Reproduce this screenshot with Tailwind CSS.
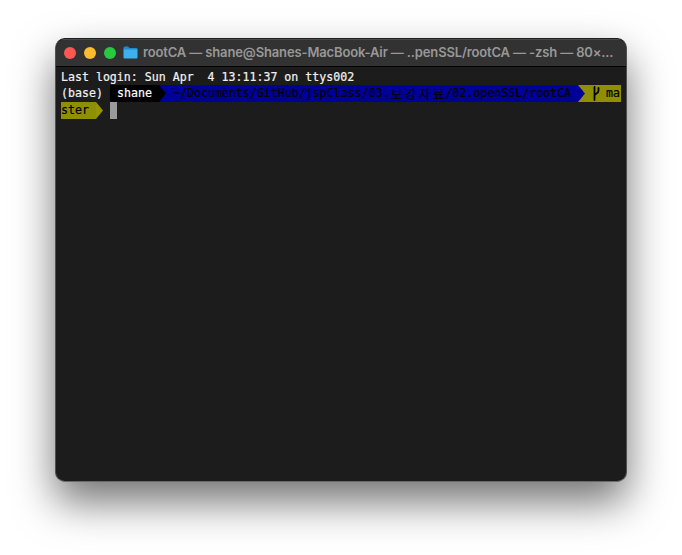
<!DOCTYPE html>
<html>
<head>
<meta charset="utf-8">
<script src="https://cdn.jsdelivr.net/npm/@tailwindcss/browser@4"></script>
</head>
<body class="bg-white">
<div class="w-[682px] h-[555px] overflow-hidden pl-[55px] pt-[38px]">
  <div class="w-[572px] h-[444px] rounded-[10px] bg-[#1c1c1c] border border-x-[#505050] border-t-[#1e1e1e] border-b-[#6a6a6a] shadow-[0_20px_42px_rgba(0,0,0,0.55)] overflow-hidden flex flex-col">
    <div class="h-[28px] shrink-0 bg-[#323232] border-b border-black shadow-[inset_0_1px_0_#4a4a4a] flex items-center pl-[8px] gap-[8px]">
      <span class="w-[12px] h-[12px] rounded-full bg-[#fc5753]"></span>
      <span class="w-[12px] h-[12px] rounded-full bg-[#fdbc2e]"></span>
      <span class="w-[12px] h-[12px] rounded-full bg-[#28c840]"></span>
      <svg class="w-[15px] h-[13px] -ml-[1px] -mr-[3px]" viewBox="0 0 15 13">
        <path d="M0.5 2 Q0.5 0.5 2 0.5 H5 L6.5 2 H13.5 Q14.5 2 14.5 3 V4 H0.5Z" fill="#1f8bd0"/>
        <path d="M0.5 3.5 H14.5 V11.5 Q14.5 12.5 13.5 12.5 H1.5 Q0.5 12.5 0.5 11.5Z" fill="#3fb0ee"/>
      </svg>
      <span class="text-[13px] leading-none font-semibold text-[#989898] whitespace-nowrap font-['Inter',sans-serif] tracking-[-0.14px]">rootCA — shane@Shanes-MacBook-Air — ..penSSL/rootCA — -zsh — 80×...</span>
    </div>
    <div class="pl-[5px] pt-[1px] font-['DejaVu_Sans_Mono',monospace] text-[11.6px] leading-[17px] text-[#f2f2f2] [-webkit-text-stroke:0.2px]">
      <div class="h-[17px] pt-[1px] whitespace-pre">Last login: Sun Apr  4 13:11:37 on ttys002</div>
      <div class="h-[17px] flex">
        <span class="w-[49px] whitespace-pre">(base)</span>
        <span class="w-[49px] bg-black text-white pl-[7px] whitespace-pre">shane</span>
        <svg class="w-[7px] h-[17px] bg-[#000099]" viewBox="0 0 7 17"><path d="M0 0 L7 8.5 L0 17Z" fill="#000"/></svg>
        <span class="w-[412px] bg-[#000099] text-black flex pl-[7px]"><span class="whitespace-pre">~/Documents/GitHub/jspClass/03.</span><span class="w-[14px] text-center font-['Noto_Sans_CJK_KR',sans-serif] text-[12.5px]">보</span><span class="w-[14px] text-center font-['Noto_Sans_CJK_KR',sans-serif] text-[12.5px]">강</span><span class="w-[14px] text-center font-['Noto_Sans_CJK_KR',sans-serif] text-[12.5px]">자</span><span class="w-[14px] text-center font-['Noto_Sans_CJK_KR',sans-serif] text-[12.5px]">료</span><span class="whitespace-pre">/02.openSSL/rootCA</span></span>
        <svg class="w-[7px] h-[17px] bg-[#8f8f00]" viewBox="0 0 7 17"><path d="M0 0 L7 8.5 L0 17Z" fill="#000099"/></svg>
        <span class="w-[36px] bg-[#8f8f00] text-black flex">
          <svg class="w-[14px] h-[17px] ml-[7px] -mr-[7px] shrink-0" viewBox="0 0 14 17"><path d="M2.5 2 V15 M6.5 3 V5.5 Q6.5 7.5 4.5 8.5 Q2.5 9.5 2.5 11" fill="none" stroke="#000" stroke-width="1.8" stroke-linecap="round"/></svg>
          <span class="ml-[7px]">ma</span>
        </span>
      </div>
      <div class="h-[17px] flex">
        <span class="w-[35px] bg-[#8f8f00] text-black">ster</span>
        <svg class="w-[7px] h-[17px]" viewBox="0 0 7 17"><path d="M0 0 L7 8.5 L0 17Z" fill="#959500"/></svg>
        <span class="w-[7px]"></span>
        <span class="w-[7px] h-[17px] bg-[#9a9a9a]"></span>
      </div>
    </div>
  </div>
</div>
</body>
</html>
